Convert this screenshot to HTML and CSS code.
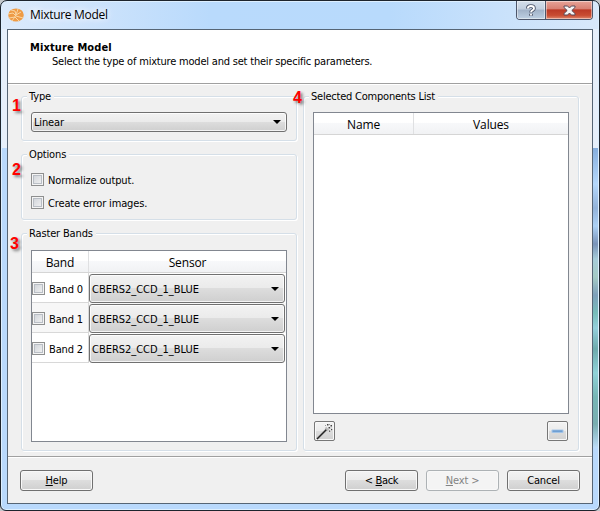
FILE: index.html
```html
<!DOCTYPE html>
<html lang="en">
<head>
<meta charset="utf-8">
<title>Mixture Model</title>
<link rel="stylesheet" href="styles.css">
</head>
<body>
<div class="window">
  <header class="titlebar">
    <svg class="logo" width="16" height="14" viewBox="0 0 16 14"><ellipse cx="8" cy="7" rx="7.8" ry="6.6" fill="#ee9b45"/><path d="M4 13C6 10 8 8 10 1M0 6l5-1 3 3 7 2M3 2l4 1 1 4 5-3M1 10l6-1 4 4" fill="none" stroke="#fbdcae" stroke-width=".9"/></svg>
    <span class="title">Mixture Model</span>
    <div class="caption">
      <span class="cap help"><svg width="12" height="13" viewBox="0 0 12 13"><path d="M2.8 4.4C2.8 1.2 9 1.2 9 4.4 9 6.3 6 6.3 6 8.4M6 9.7v2" fill="none" stroke="#4b5267" stroke-width="3.6"/><path d="M2.8 4.4C2.8 1.2 9 1.2 9 4.4 9 6.3 6 6.3 6 8.2M6 9.8v1.6" fill="none" stroke="#fff" stroke-width="1.8"/></svg></span>
      <span class="cap close"><svg width="13" height="11" viewBox="0 0 13 11"><path d="M1 1h3.6l1.9 2 1.9-2H12v1.5L8.8 5.5 12 8.5V10H8.4l-1.9-2-1.9 2H1V8.5L4.2 5.5 1 2.5z" fill="#f5f5f5" stroke="#5a4a58" stroke-width="1"/></svg></span>
    </div>
  </header>
  <main class="client">
    <div class="intro">
      <h1>Mixture Model</h1>
      <p>Select the type of mixture model and set their specific parameters.</p>
    </div>
    <div class="content">
      <div class="left">
        <section class="group type">
          <h2>Type</h2><b class="mark m1">1</b>
          <div class="combo">Linear<i></i></div>
        </section>
        <section class="group options">
          <h2>Options</h2><b class="mark m2">2</b>
          <label class="check"><span class="box"></span><span class="text">Normalize output.</span></label>
          <label class="check"><span class="box"></span><span class="text">Create error images.</span></label>
        </section>
        <section class="group bands">
          <h2>Raster Bands</h2><b class="mark m3">3</b>
          <div class="table">
            <div class="thead"><span>Band</span><span>Sensor</span></div>
            <div class="row"><label><span class="box"></span><span class="text">Band 0</span></label><div class="combo tall">CBERS2_CCD_1_BLUE<i></i></div></div>
            <div class="row alt"><label><span class="box"></span><span class="text">Band 1</span></label><div class="combo tall">CBERS2_CCD_1_BLUE<i></i></div></div>
            <div class="row"><label><span class="box"></span><span class="text">Band 2</span></label><div class="combo tall">CBERS2_CCD_1_BLUE<i></i></div></div>
          </div>
        </section>
      </div>
      <section class="group components">
        <h2>Selected Components List</h2><b class="mark m4">4</b>
        <div class="table">
          <div class="thead"><span>Name</span><span>Values</span></div>
        </div>
        <div class="tools">
          <span class="tool"><svg width="17" height="17" viewBox="0 0 17 17"><path d="M1 16L11 6" stroke="#aaa" stroke-width="2.4"/><path d="M1 16L11 6" stroke="#222" stroke-width="1.2"/><path d="M9.5 4.5l3 3" stroke="#bbb" stroke-width="2"/><path d="M11 1h1.5v1.500H11zM14.500 2H16v1.500h-1.500zM12.500 4H14v1.500h-1.500zM15 6h1.200v1.200H15zM13 7.500h1.200v1.200H13z" fill="#444"/><path d="M9 2h1v1H9zM13 1h1v1h-1zM14.500 4.500h1v1h-1z" fill="#999"/></svg></span>
          <span class="tool"><svg width="13" height="5" viewBox="0 0 13 5"><rect x=".5" y=".5" width="12" height="3.500" rx=".8" fill="#a9c8e8"/><rect x="1.500" y="1.300" width="10" height="1.800" fill="#6f9fd3"/></svg></span>
        </div>
      </section>
    </div>
    <footer class="footer">
      <button class="btn"><u>H</u>elp</button>
      <button class="btn back">&lt; <u>B</u>ack</button>
      <button class="btn" disabled><u>N</u>ext &gt;</button>
      <button class="btn">Cancel</button>
    </footer>
  </main>
</div>
</body>
</html>
```

FILE: styles.css
```css
* { box-sizing: border-box; }
body { margin: 0; background: #c4c8cc; font: 11px/14px "DejaVu Sans Condensed", "DejaVu Sans", sans-serif; font-stretch: condensed; color: #000; letter-spacing: -.15px; overflow: hidden; }
.window {
  width: 600px; height: 511px; padding: 0 6px; border: 1px solid #1d242d; border-radius: 7px 7px 6px 6px;
  background:
    linear-gradient(#e6effa, #e6effa) 0 28px / 6px 119px no-repeat,
    linear-gradient(#e6effa, #e6effa) 100% 28px / 6px 119px no-repeat,
    linear-gradient(#86aedd, #b5d8fb 12%, #93b3d9 20%, #acd1f5 26%, #7993b8 32%, #a6ccd8 37%, #a5cbc5 43%, #7e9fba 49%, #77bdb9 55%, #94cfdb 60%, #6daaac 67%, #90d2d8 75%, #76b5b5 83%, #79aeb0 92%, #bddcf8) 100% 147px / 6px 300px no-repeat,
    linear-gradient(90deg, #dceafb, #b9dafc 35%, #b8dafc 65%, #d8e8fa) 0 0 / 100% 28px no-repeat,
    #b9d9fc;
  box-shadow: inset 0 0 0 1px #ddefff;
}
.titlebar { height: 28px; display: flex; align-items: flex-start; }
.logo { margin: 7px 0 0 1px; }
.title { margin: 6px 0 0 6px; font: 12px/16px "Open Sans", sans-serif; text-shadow: 0 0 6px #fff, 0 0 8px #fff; letter-spacing: -.3px; }
.caption { margin: 0 0 0 auto; height: 19px; display: flex; border: 1px solid #4d566b; border-top: 0; border-radius: 0 0 4px 4px; overflow: hidden; }
.cap { display: flex; align-items: center; justify-content: center; box-shadow: inset 0 0 0 1px rgba(255,255,255,.45); }
.help { width: 28px; background: linear-gradient(#d5dfeb, #c2cfdf 45%, #a1b2c8 50%, #bed0e3); }
.close { width: 47px; border-left: 1px solid #4d566b; background: linear-gradient(#e7a398, #d98174 42%, #bc3a26 50%, #c94d33 80%, #df886d); }
.client { width: 586px; height: 475px; border: 1px solid #566575; background: #f0f0f0; }
.intro { height: 54px; background: #fff; border-bottom: 1px solid #a0a0a0; padding: 11px 0 0 22px; }
.intro h1 { margin: 0; font-size: 11px; line-height: 14px; letter-spacing: .12px; }
.intro p { margin: 0 0 0 22px; line-height: 14px; letter-spacing: -.2px; }
.content { display: flex; gap: 6px; height: 373px; padding: 12px 12px 5px 13px; box-shadow: inset 0 1px #fff; border-bottom: 1px solid #a0a0a0; }
.left { width: 276px; display: flex; flex-direction: column; }
.group { position: relative; border: 1px solid #d5dfe8; border-radius: 3px; box-shadow: inset 1px 1px #fff, 1px 1px #fff; padding: 0 9px; }
.group h2 { width: max-content; height: 14px; margin: -7px 0 0 -4px; padding: 0 3px 0 2px; background: #f0f0f0; font: inherit; }
.components h2 { letter-spacing: -.22px; }
.type { height: 45px; margin-bottom: 13px; }
.options { height: 66px; margin-bottom: 13px; }
.bands { height: 218px; }
.components { width: 276px; height: 355px; }
.combo { position: relative; height: 20px; margin-top: 8px; padding-left: 2px; line-height: 20px; border: 1px solid #707070; border-radius: 3px; background: linear-gradient(#f2f2f2, #ebebeb 48%, #dddddd 50%, #cfcfcf); box-shadow: inset 0 0 0 1px rgba(255,255,255,.75); }
.combo i { position: absolute; right: 5px; top: 50%; margin-top: -2px; border: 4px solid transparent; border-top-color: #000; border-bottom: 0; }
.check { display: flex; align-items: center; height: 13px; gap: 4px; margin-top: 10px; }
.text { padding-top: 2px; }
.options h2 + .mark + .check { margin-top: 11px; }
.box { width: 13px; height: 13px; flex: none; border: 1px solid #8e8f8f; background: linear-gradient(135deg, #cbcfd5, #f6f6f6); box-shadow: inset 0 0 0 1px #f4f4f4, inset 0 0 0 2px #b9bec5; }
.table { height: 192px; margin-top: 9px; border: 1px solid #828790; background: #fff; }
.thead { display: flex; height: 22px; border-bottom: 1px solid #d5d5d5; background: linear-gradient(#fff 45%, #f7f8fa 50%, #f1f2f4); font: 12px/23px "Open Sans", sans-serif; text-align: center; }
.thead span { flex: 1; }
.thead span:first-child { flex: none; width: 57px; border-right: 1px solid #dfe0e2; }
.components .thead span:first-child { width: 100px; }
.row { display: flex; height: 30px; padding-right: 1px; }
.row label { width: 57px; display: flex; align-items: center; gap: 4px; padding-top: 2px; border: solid #d8d8d8; border-width: 0 1px 1px 0; }
.alt { background: #f7f7f7; }
.tall { flex: 1; height: 29px; margin: 1px 0 0; line-height: 30px; letter-spacing: -.02px; }
.components .table { height: 302px; margin-top: 8px; }
.tools { display: flex; justify-content: space-between; margin: 7px 1px 0; }
.tool { width: 21px; height: 20px; display: flex; align-items: center; justify-content: center; border: 1px solid #777; border-radius: 2px; background: linear-gradient(#f3f3f3, #ebebeb 48%, #ddd 50%, #d1d1d1); box-shadow: inset 0 0 0 1px #f8f8f8; }
.footer { display: flex; gap: 8px; padding: 13px 12px 0; box-shadow: inset 0 1px #fff; }
.btn { width: 73px; height: 21px; padding: 1px 0 0; font: inherit; letter-spacing: inherit; color: #000; border: 1px solid #707070; border-radius: 3px; background: linear-gradient(#f3f3f3, #ebebeb 48%, #ddd 50%, #cfcfcf); box-shadow: inset 0 0 0 1px #f8f8f8; }
.btn:disabled { color: #838383; border-color: #adb2b5; background: #f4f4f4; }
.back { margin-left: auto; letter-spacing: -.35px; }
.btn u { text-underline-offset: 1px; }
.mark { position: absolute; font: bold 16px/16px "Liberation Sans", sans-serif; color: #f00; text-shadow: 2px 2px 3px rgba(0,0,0,.5); }
.m1 { left: -10px; top: 1px; }
.m2 { left: -10px; top: 7px; }
.m3 { left: -12px; top: 2px; }
.m4 { left: -11px; top: -7px; }
```
